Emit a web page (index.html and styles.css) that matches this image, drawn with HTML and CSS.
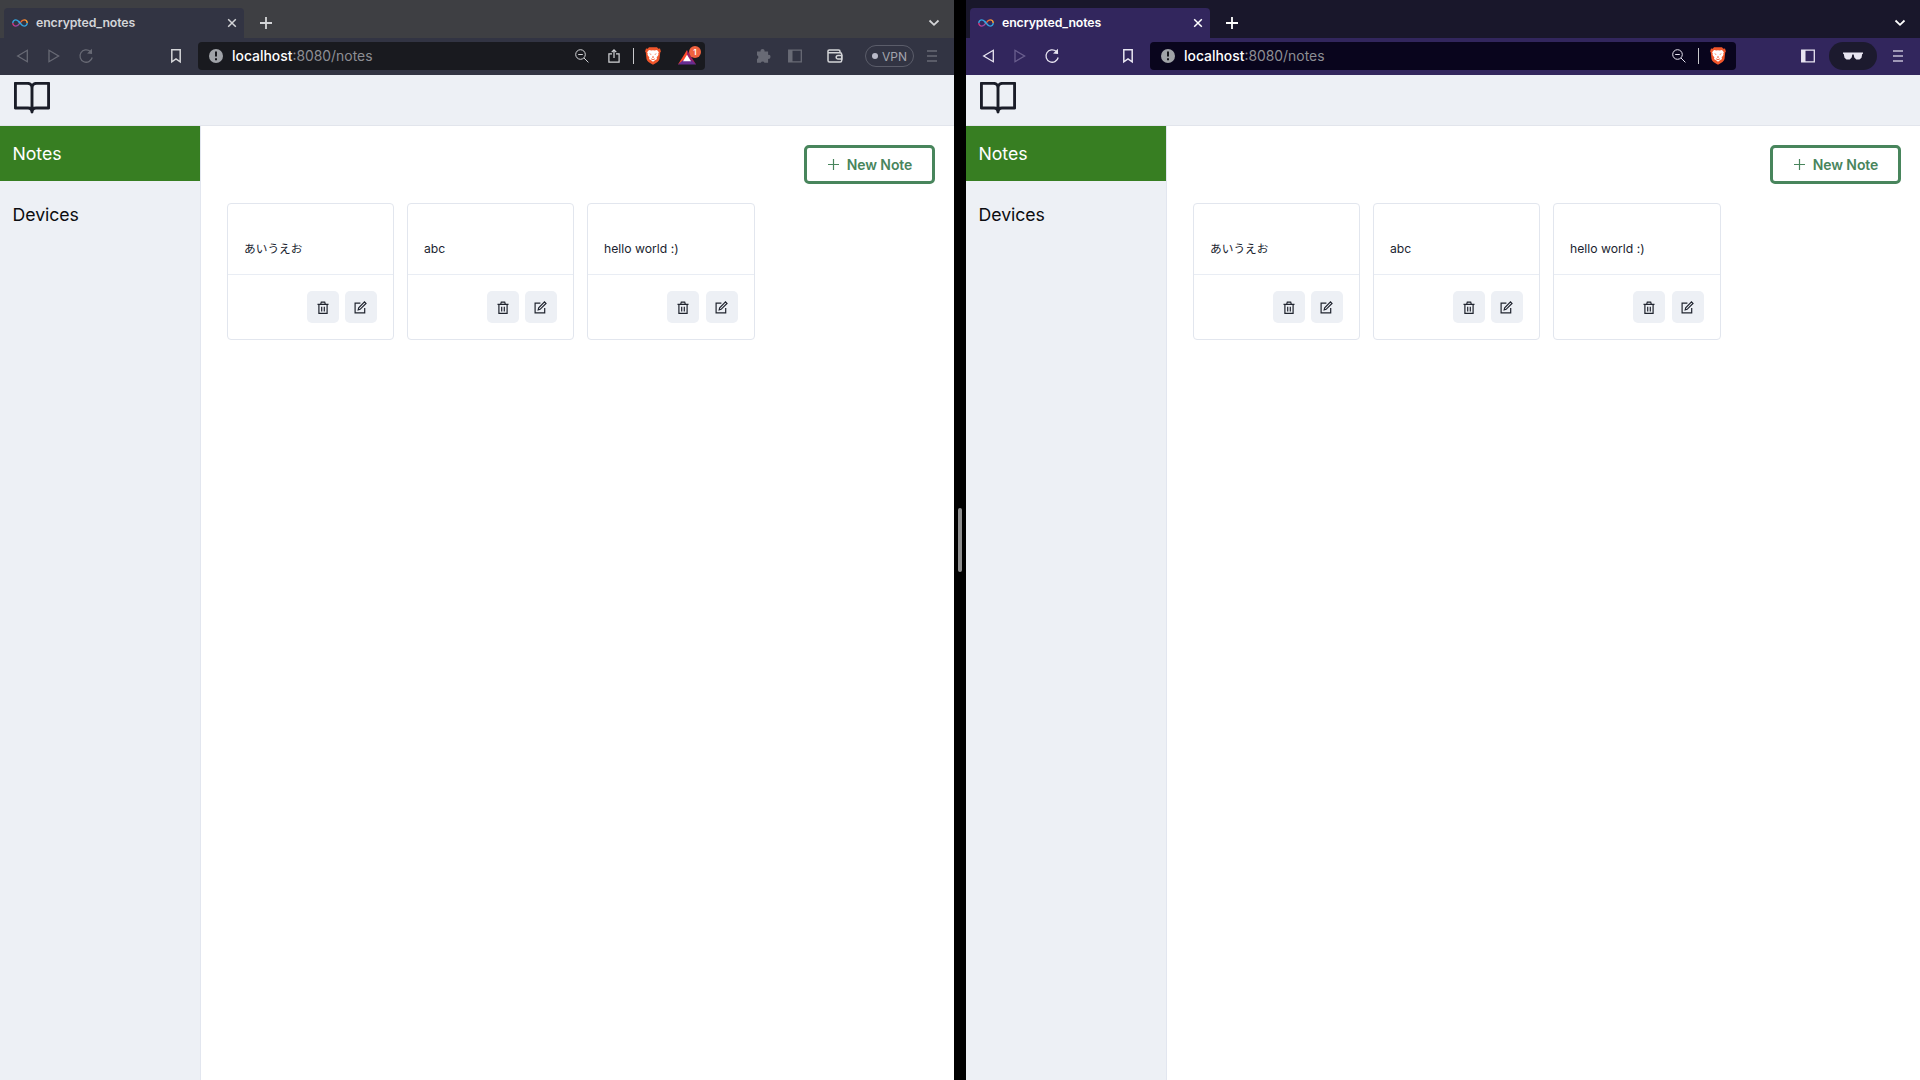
FILE: index.html
```html
<!DOCTYPE html>
<html lang="en">
<head>
<meta charset="utf-8">
<title>encrypted_notes</title>
<link rel="stylesheet" href="styles.css">
</head>
<body>
<svg class="sprite" aria-hidden="true">
  <defs>
    <linearGradient id="loopA" x1="0" x2="1"><stop offset="0" stop-color="#d8347c"/><stop offset=".35" stop-color="#8a4bb0"/><stop offset=".6" stop-color="#f0642c"/><stop offset="1" stop-color="#f7a93a"/></linearGradient>
  </defs>
  <symbol id="i-loop" viewBox="0 0 16 8"><path d="M8 4C6.300 1.800 5.200.9 3.900.9A3.100 3.100 0 0 0 .8 4" stroke="#35a5e0"/><path d="M.8 4a3.100 3.100 0 0 0 3.100 3.100C6 7.100 7.500 4.700 8 4s2-3.100 4.100-3.100A3.100 3.100 0 0 1 15.200 4" stroke="url(#loopA)"/><path d="M8 4c1.700 2.200 2.800 3.100 4.100 3.100A3.100 3.100 0 0 0 15.200 4M8 4 6.600 2.300" stroke="#35a5e0"/></symbol>
  <symbol id="i-close" viewBox="0 0 10 10"><path d="m1.200 1.200 7.600 7.600m0-7.600L1.200 8.800"/></symbol>
  <symbol id="i-plus" viewBox="0 0 12 12"><path d="M6 0v12M0 6h12"/></symbol>
  <symbol id="i-chevron" viewBox="0 0 12 8"><path d="m1.500 1.500 4.500 4.300 4.500-4.300"/></symbol>
  <symbol id="i-back" viewBox="0 0 14 16"><path d="M11.300 2.300v11.400L1.700 8z"/></symbol>
  <symbol id="i-forward" viewBox="0 0 14 16"><path d="M2 2.300v11.400L11.600 8z"/></symbol>
  <symbol id="i-reload" viewBox="0 0 16 16"><path d="M14.200 9.500a6.200 6.200 0 1 1-2-6.200"/><path class="fill" d="m13.900.8.2 5.200-5-.6z"/></symbol>
  <symbol id="i-bookmark" viewBox="0 0 12 16"><path d="M1.800 1.800h8.400v12L6 10.900 1.800 13.800z"/></symbol>
  <symbol id="i-info" viewBox="0 0 14 14"><circle cx="7" cy="7" r="7" fill="#a0a3a8" stroke="none"/><path d="M7 2.600v5M7 9.300v2" stroke="#17181d" stroke-width="2"/></symbol>
  <symbol id="i-zoom" viewBox="0 0 14 14"><circle cx="5.500" cy="5.500" r="4.800"/><path d="m9 9 4.400 4.400M3.200 5.500h4.600"/></symbol>
  <symbol id="i-share" viewBox="0 0 12 14"><path d="M4 4.900H.9v8.300h10.200V4.900H8M6 9V1M3.700 3.100 6 .9l2.300 2.200"/></symbol>
  <symbol id="i-brave" viewBox="0 0 16 18"><path d="M4 .3h8l1.300 1.400 1.700-.1.900 2.800-.7 1.200-.7 6.500c-.4 2.300-2.700 3.700-6.500 5.700-3.800-2-6.100-3.400-6.500-5.700L.8 5.600.1 4.400 1 1.600l1.700.1z" fill="#f1562b"/><path d="m4 3.100 2.400.5L8 3.200l1.600.4 2.400-.5 1.900 2.200-.6 1 .1 1.700-1.800 2.600.4 1.300L10 13.300l-2 1.500-2-1.500-2-1.400.4-1.300L2.600 8l.1-1.700-.6-1z" fill="#fff"/><path d="m4 6.400 2.500.5-.5.900zm8 0-2.500.5.500.9zM8 8.800l.9 1.500-.9.600-.9-.6zM5.700 11.200 8 12.300l2.300-1.100-1 1.500L8 13l-1.300-.3z" fill="#f1562b"/></symbol>
  <symbol id="i-rewards" viewBox="0 0 20 16"><path d="M9.500.5 0 16l9.500-5z" fill="#ff4b2b"/><path d="M9.500.5 19 16l-9.500-5z" fill="#9e1f63"/><path d="M0 16h19l-5-4.500H5z" fill="#662d91"/><path d="m9.500 5.500 4.200 7H5.300z" fill="#fff"/></symbol>
  <symbol id="i-puzzle" viewBox="0 0 15 14"><path class="fill" d="M1 2.500h3.600a2 2 0 1 1 3.900 0h3.600v3.400a2 2 0 1 1 0 3.900v3.900H8.500a2 2 0 0 0-3.700 0H1V10a2 2 0 0 0 0-3.800z"/></symbol>
  <symbol id="i-panel" viewBox="0 0 14 14"><path d="M.7 1.200h12.600v11.600H.7z"/><path class="fill" d="M.5 1h4v12h-4z"/></symbol>
  <symbol id="i-wallet" viewBox="0 0 16 14"><path d="M13 3.800V2.500A1.500 1.500 0 0 0 11.500 1H2.300a1.300 1.300 0 0 0 0 2.800H13c1 0 1.700.6 1.700 1.500v6.200c0 .9-.7 1.500-1.500 1.500H2.500A1.500 1.500 0 0 1 1 11.500v-9M15 6.500h-4a1.800 1.800 0 0 0 0 3.600h4z"/></symbol>
  <symbol id="i-menu" viewBox="0 0 10 12"><path d="M0 1h10M0 6h10M0 11h10"/></symbol>
  <symbol id="i-glasses" viewBox="0 0 20 8"><path class="fill" d="M0 .4h20v1.300l-.8.4-.7 3.600-2 1.700h-3.200l-2-2-.6-3H9.300l-.6 3-2 2H3.500l-2-1.700-.7-3.600-.8-.4z"/></symbol>
  <symbol id="i-book" viewBox="0 0 36 32"><path d="M18 6c0-2.700-2-4.700-4.600-4.700H1.400v24.700h12.600c2.600 0 4 1.400 4 4zm0 0c0-2.700 2-4.700 4.600-4.700h12v24.700H22c-2.600 0-4 1.400-4 4z"/></symbol>
  <symbol id="i-trash" viewBox="0 0 12 14"><path d="M.5 3.300h11M1.900 3.300v9.100h8.200V3.300M3.700 3.100l.6-2h3.400l.6 2M4.700 5.700v4.700m2.600-4.700v4.700"/></symbol>
  <symbol id="i-edit" viewBox="0 0 13 13"><path d="M6.400 2.200H1.100v9.700h9.600V7M4.200 8.900l.5-2.100L10.500.9l1.500 1.500-5.900 5.900z"/></symbol>
</svg>

<div class="desktop">
  <section class="window window--normal">
    <div class="tabstrip">
      <div class="tab"><svg class="ic loop"><use href="#i-loop"/></svg><span class="tab-title">encrypted_notes</span><svg class="ic close"><use href="#i-close"/></svg></div>
      <svg class="ic newtab"><use href="#i-plus"/></svg>
      <svg class="ic chevron"><use href="#i-chevron"/></svg>
    </div>
    <div class="toolbar">
      <div class="nav"><svg class="ic arrow dim"><use href="#i-back"/></svg><svg class="ic arrow dim"><use href="#i-forward"/></svg><svg class="ic reload dim"><use href="#i-reload"/></svg></div>
      <svg class="ic bookmark"><use href="#i-bookmark"/></svg>
      <div class="address">
        <svg class="ic info"><use href="#i-info"/></svg><span class="url"><b>localhost</b>:8080/notes</span>
        <svg class="ic zoom"><use href="#i-zoom"/></svg><svg class="ic share"><use href="#i-share"/></svg><i class="sep"></i><svg class="ic brave"><use href="#i-brave"/></svg>
        <div class="rewards"><svg class="ic"><use href="#i-rewards"/></svg><span class="badge">1</span></div>
      </div>
      <div class="tools"><svg class="ic puzzle dim"><use href="#i-puzzle"/></svg><svg class="ic panel dim"><use href="#i-panel"/></svg><svg class="ic wallet"><use href="#i-wallet"/></svg><span class="vpn">VPN</span><svg class="ic menu dim"><use href="#i-menu"/></svg></div>
    </div>
    <header class="app-header"><svg class="ic book"><use href="#i-book"/></svg></header>
    <div class="app">
      <nav class="sidebar"><a class="active">Notes</a><a>Devices</a></nav>
      <main>
        <button class="new-note"><svg class="ic"><use href="#i-plus"/></svg>New Note</button>
        <div class="cards">
          <article class="card"><p lang="ja">あいうえお</p><footer><button><svg class="ic trash"><use href="#i-trash"/></svg></button><button><svg class="ic edit"><use href="#i-edit"/></svg></button></footer></article>
          <article class="card"><p>abc</p><footer><button><svg class="ic trash"><use href="#i-trash"/></svg></button><button><svg class="ic edit"><use href="#i-edit"/></svg></button></footer></article>
          <article class="card"><p>hello world :)</p><footer><button><svg class="ic trash"><use href="#i-trash"/></svg></button><button><svg class="ic edit"><use href="#i-edit"/></svg></button></footer></article>
        </div>
      </main>
    </div>
  </section>

  <div class="divider"><span></span></div>

  <section class="window window--private">
    <div class="tabstrip">
      <div class="tab"><svg class="ic loop"><use href="#i-loop"/></svg><span class="tab-title">encrypted_notes</span><svg class="ic close"><use href="#i-close"/></svg></div>
      <svg class="ic newtab"><use href="#i-plus"/></svg>
      <svg class="ic chevron"><use href="#i-chevron"/></svg>
    </div>
    <div class="toolbar">
      <div class="nav"><svg class="ic arrow"><use href="#i-back"/></svg><svg class="ic arrow dim"><use href="#i-forward"/></svg><svg class="ic reload"><use href="#i-reload"/></svg></div>
      <svg class="ic bookmark"><use href="#i-bookmark"/></svg>
      <div class="address">
        <svg class="ic info"><use href="#i-info"/></svg><span class="url"><b>localhost</b>:8080/notes</span>
        <svg class="ic zoom"><use href="#i-zoom"/></svg><i class="sep"></i><svg class="ic brave"><use href="#i-brave"/></svg>
      </div>
      <div class="tools"><svg class="ic panel"><use href="#i-panel"/></svg><span class="private-badge"><svg class="ic glasses"><use href="#i-glasses"/></svg></span><svg class="ic menu"><use href="#i-menu"/></svg></div>
    </div>
    <header class="app-header"><svg class="ic book"><use href="#i-book"/></svg></header>
    <div class="app">
      <nav class="sidebar"><a class="active">Notes</a><a>Devices</a></nav>
      <main>
        <button class="new-note"><svg class="ic"><use href="#i-plus"/></svg>New Note</button>
        <div class="cards">
          <article class="card"><p lang="ja">あいうえお</p><footer><button><svg class="ic trash"><use href="#i-trash"/></svg></button><button><svg class="ic edit"><use href="#i-edit"/></svg></button></footer></article>
          <article class="card"><p>abc</p><footer><button><svg class="ic trash"><use href="#i-trash"/></svg></button><button><svg class="ic edit"><use href="#i-edit"/></svg></button></footer></article>
          <article class="card"><p>hello world :)</p><footer><button><svg class="ic trash"><use href="#i-trash"/></svg></button><button><svg class="ic edit"><use href="#i-edit"/></svg></button></footer></article>
        </div>
      </main>
    </div>
  </section>
</div>
</body>
</html>
```
FILE: styles.css
```css
* { box-sizing: border-box; }
body { margin: 0; background: #000; font-family: Inter, "Noto Sans CJK JP", sans-serif; }
.sprite { position: absolute; width: 0; height: 0; }
.ic { display: block; flex: none; fill: none; stroke: currentColor; stroke-width: 1.3; }
.fill { fill: currentColor; stroke: none; }
.dim { color: var(--dim); }
.desktop { display: flex; width: 1920px; height: 1080px; overflow: hidden; }
.window { width: 954px; display: flex; flex-direction: column; background: #fff; }
.window--normal { --strip: #3e3f43; --bar: #323443; --field: #191a1f; --dim: #686a75; --icon: #d4d5d8; --title: #d4d5d8; }
.window--private { --strip: #19172b; --bar: #32265d; --field: #09051d; --dim: #6a5f8e; --icon: #e8e5f1; --title: #fff; }
.divider { width: 12px; background: #000; display: flex; align-items: center; justify-content: center; }
.divider span { width: 4px; height: 64px; border-radius: 2px; background: #8d8d8d; }

/* Browser chrome */
.tabstrip { height: 38px; padding: 8px 14px 0 4px; display: flex; align-items: center; background: var(--strip); color: var(--title); }
.tab { width: 240px; height: 30px; padding: 0 7px 2px 8px; display: flex; align-items: center; background: var(--bar); border-radius: 4px 4px 0 0; }
.loop { width: 16px; height: 8px; margin-top: 1px; stroke-width: 1.4; }
.tab-title { margin-left: 8px; flex: 1; font-size: 12.3px; font-weight: 600; letter-spacing: -.1px; }
.close { width: 10px; height: 10px; margin-top: 1px; stroke-width: 1.5; }
.newtab { width: 12px; height: 12px; margin-left: 16px; stroke-width: 1.8; }
.chevron { width: 12px; height: 8px; margin-left: auto; stroke-width: 1.8; }
.toolbar { height: 37px; padding-bottom: 1px; display: flex; align-items: center; background: var(--bar); color: var(--icon); }
.nav { width: 78px; margin-left: 16px; display: flex; align-items: center; }
.arrow { width: 14px; height: 16px; margin-right: 17px; }
.reload { width: 16px; height: 16px; }
.bookmark { width: 12px; height: 16px; margin-left: 76px; stroke-width: 1.5; }
.address { height: 28px; margin-left: 16px; padding-left: 11px; display: flex; align-items: center; border-radius: 4px; background: var(--field); }
.window--normal .address { width: 507px; }
.window--private .bookmark { margin-left: 62px; }
.window--private .address { width: 586px; }
.info { width: 14px; height: 14px; }
.url { flex: 1; margin-left: 9px; font-size: 13.9px; color: #8d8e94; }
.url b { font-weight: 500; color: #fff; }
.zoom { width: 14px; height: 14px; stroke-width: 1; }
.share { width: 12px; height: 14px; margin-left: 19px; stroke-width: 1.2; }
.sep { width: 1px; height: 16px; margin: 0 11px 0 13px; background: #c9c9cc; }
.window--private .sep { margin-left: 12px; }
.brave { width: 16px; height: 18px; stroke: none; }
.window--private .brave { margin-right: 10px; }
.rewards { position: relative; width: 27px; height: 20px; margin: 0 0 0 17px; }
.rewards .ic { width: 19px; height: 16px; margin-top: 3px; stroke: none; }
.badge { position: absolute; left: 11px; top: 0; width: 12px; height: 12px; border-radius: 6px; background: #f0623f; color: #fff; font: 600 8px/12px Inter, sans-serif; text-align: center; }
.tools { flex: 1; display: flex; align-items: center; justify-content: flex-end; padding-right: 17px; }
.puzzle { width: 15px; height: 14px; }
.panel { width: 14px; height: 14px; margin-left: 17.500px; }
.wallet { width: 16px; height: 14px; margin-left: 25px; stroke-width: 1.5; }
.vpn { width: 49px; height: 22px; margin-left: 22px; display: flex; align-items: center; justify-content: center; gap: 4px; border: 1px solid #5b5d6a; border-radius: 11px; color: #a3a4ad; font-size: 12px; }
.vpn::before { content: ""; width: 6px; height: 6px; border-radius: 50%; background: #b9bac8; }
.menu { width: 10px; height: 12px; margin-left: 13px; stroke-width: 1.7; }
.private-badge { width: 48px; height: 28px; margin-left: 14px; display: flex; align-items: center; justify-content: center; border-radius: 14px; background: #1c1a2e; }
.glasses { width: 20px; height: 8px; }
.window--private .menu { margin-left: 16px; color: #c4bfd4; }

/* Notes application */
.app-header { height: 51px; padding: 7px 14px; background: #edf0f5; border-bottom: 1px solid #e2e5ec; color: #1a1d28; }
.book { width: 36px; height: 32px; stroke-width: 2.9; stroke-linejoin: round; }
.app { flex: 1; display: flex; }
.sidebar { width: 201px; background: #edf0f5; border-right: 1px solid #e2e6ef; }
.sidebar a { height: 55px; margin-bottom: 6px; padding-left: 12.500px; display: flex; align-items: center; font-size: 17.700px; letter-spacing: -.05px; color: #0c0d10; }
.sidebar .active { background: #377e22; color: #fff; }
main { flex: 1; padding: 19px 19px 0 26px; display: flex; flex-direction: column; align-items: flex-start; }
.new-note { align-self: flex-end; width: 131px; height: 39px; padding: 0 0 0 1px; display: flex; align-items: center; justify-content: center; gap: 8px; border: 3px solid #48855c; border-radius: 5px; background: #fff; color: #48855c; font: 600 14px Inter, sans-serif; letter-spacing: -.1px; }
.new-note .ic { width: 11px; height: 11px; stroke-width: 1.3; }
.cards { margin-top: 19px; display: grid; grid-template-columns: 167px 167px 168px; gap: 13px; }
.card { height: 137px; border: 1px solid #e2e6ee; border-radius: 4px; }
.card p { height: 71px; margin: 0; padding: 37px 16px 0; border-bottom: 1px solid #e9edf4; color: #20242f; font-size: 12.200px; line-height: 16px; }
.card p:lang(ja) { font-size: 11.700px; line-height: 17px; }
.card footer { padding: 16px 16px 0; display: flex; justify-content: flex-end; gap: 6px; }
.card:last-child footer { gap: 7px; }
.card button { width: 32px; height: 32px; padding: 0 1px 0 0; display: flex; align-items: center; justify-content: center; border: 0; border-radius: 5px; background: #edf0f5; color: #20242f; }
.trash { width: 12px; height: 14px; margin-top: 1px; stroke-width: 1.200; }
.edit { width: 13px; height: 13px; stroke-width: 1.200; }
```
